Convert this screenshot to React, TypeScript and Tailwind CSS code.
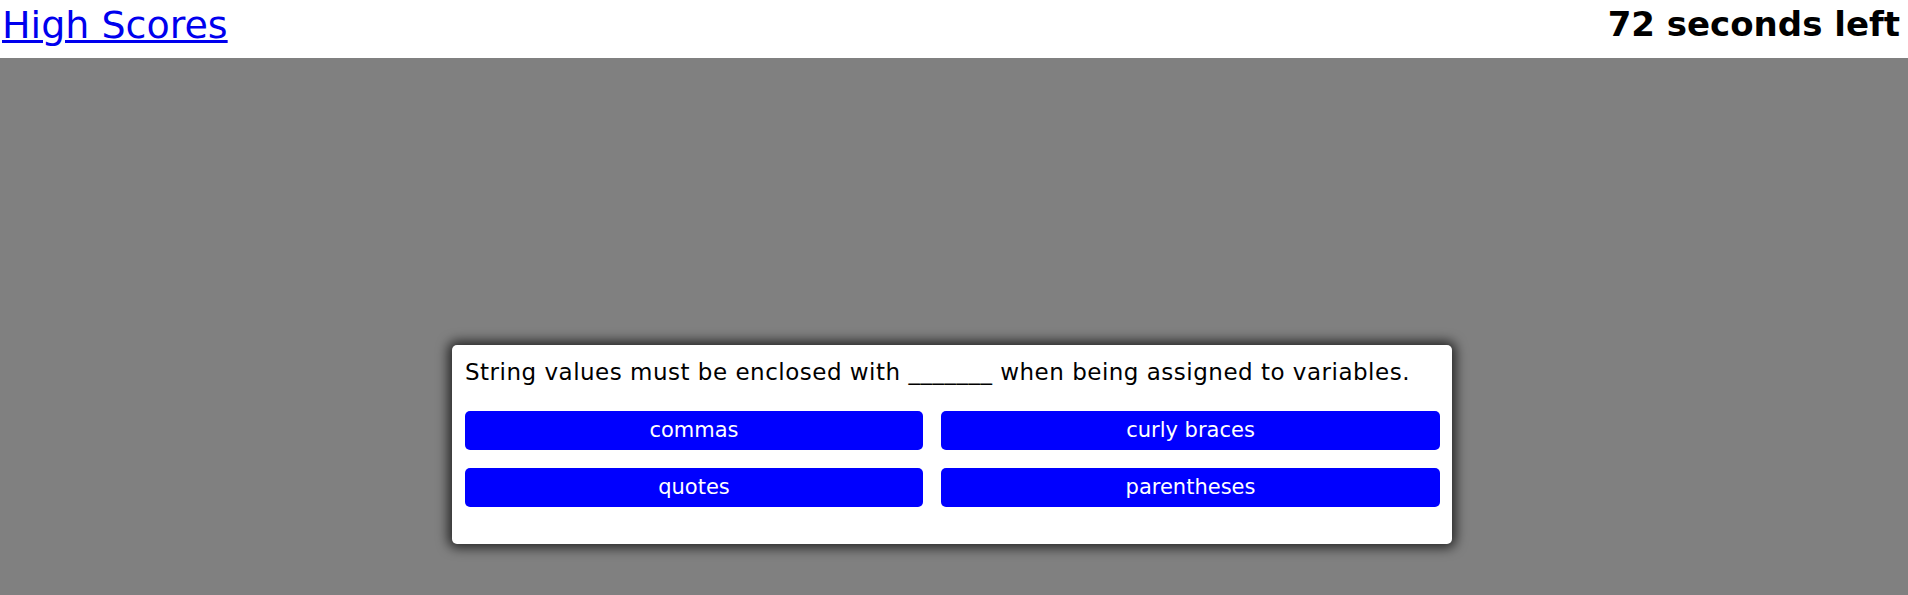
const answers = ['commas', 'curly braces', 'quotes', 'parentheses'];

export default function App() {
  return (
    <div className="min-h-[595px] bg-[#808080] font-['DejaVu_Sans',sans-serif]">
      <header className="flex h-[58px] items-start justify-between bg-white pl-[2px] pr-[8px]">
        <a href="#" className="text-[38px] leading-[50px] text-[#0000ee] underline decoration-[3px]">
          High Scores
        </a>
        <span className="text-[34px] font-bold leading-[48px] text-black">72 seconds left</span>
      </header>
      <main className="pt-[287px] pl-[452px]">
        <div className="w-[1000px] h-[199px] rounded-[5px] bg-white pt-[13px] pl-[13px] pr-[12px] shadow-[0_0_12px_4px_rgba(0,0,0,0.7)]">
          <p className="text-[23px] leading-[28px] tracking-[0.5px] text-black">
            String values must be enclosed with _______ when being assigned to variables.
          </p>
          <div className="mt-[25px] grid grid-cols-[458px_499px] gap-x-[18px] gap-y-[18px]">
            {answers.map((a) => (
              <button
                key={a}
                className="h-[39px] rounded-[5px] bg-[#0000ff] text-[21px] text-white"
              >
                {a}
              </button>
            ))}
          </div>
        </div>
      </main>
    </div>
  );
}
